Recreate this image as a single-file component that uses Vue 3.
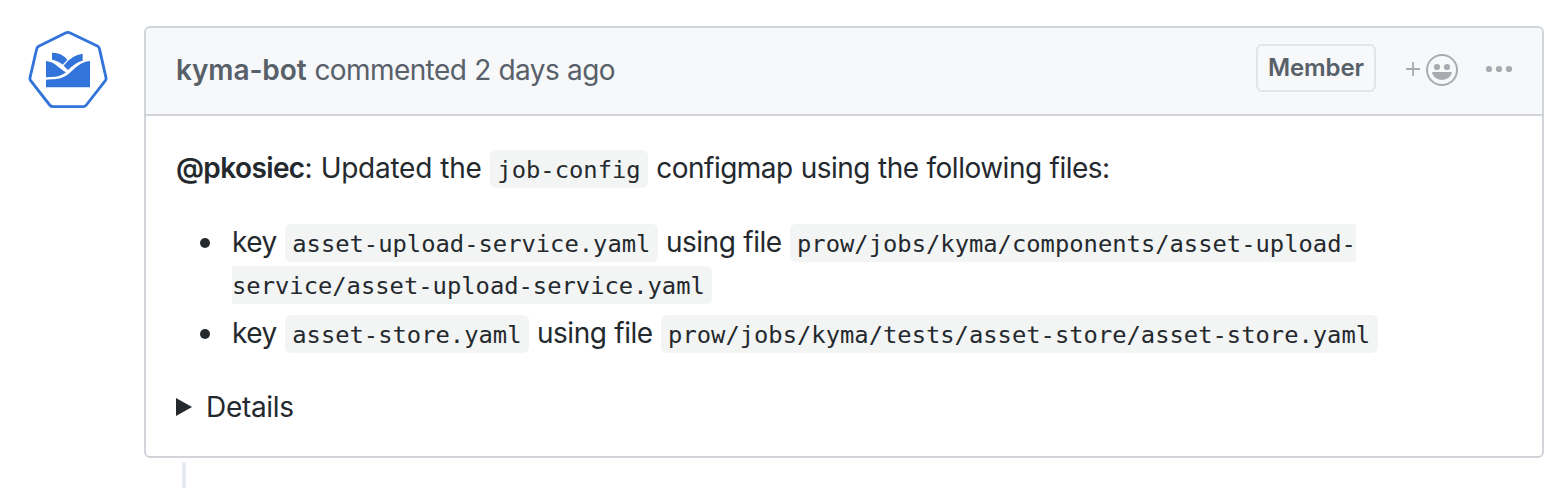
<script setup>
const files = [
  { key: 'asset-upload-service.yaml', path: 'prow/jobs/kyma/components/asset-upload-service/asset-upload-service.yaml' },
  { key: 'asset-store.yaml', path: 'prow/jobs/kyma/tests/asset-store/asset-store.yaml' },
]
</script>

<template>
  <main class="timeline">
    <svg class="avatar" viewBox="54 48 240 240" aria-label="kyma-bot">
      <path d="M168 53.5Q173.500 51 179 53.500L262 93Q267 95.500 268 100L288 188Q289 193 286 197L229 270Q225 275 219 275H129Q123 275 119 270L62 197Q59 193 60 188L80 102Q81 97 86 94Z" fill="#fff" stroke="#3274d9" stroke-width="8.5" stroke-linejoin="round" />
      <g fill="#3274d9">
        <path d="M126 113Q154 112 172 134L158 149Q146 138 126 134Z" />
        <path d="M218 116V137Q198 141 174 165L161 152Q186 119 218 116Z" />
        <path d="M108 138C138 142 148 162 168 172Q153 184 136 185Q122 185 108 187Z" />
        <path d="M240 138V217H108V194C132 192 154 196 178 175C196 159 211 140 240 138Z" />
      </g>
    </svg>
    <div class="column">
      <article class="comment">
        <header class="head">
          <div class="byline"><strong>kyma-bot</strong> <span class="when">commented 2 days ago</span></div>
          <div class="actions">
            <span class="label">Member</span>
            <svg class="react" viewBox="0 0 54 34" fill="#a8abb1">
              <path d="M1 16H15M8 9V23" stroke="#a8abb1" stroke-width="1.800" />
              <circle cx="37" cy="17" r="15" fill="none" stroke="#a8abb1" stroke-width="2" />
              <circle cx="32" cy="14" r="3.100" />
              <circle cx="42" cy="14" r="3.100" />
              <path d="M28 19H46Q47.300 19 46.800 20.300C45 25 41 27 37 27S29 25 27.200 20.300Q26.700 19 28 19Z" />
            </svg>
            <svg class="more" viewBox="0 0 28 8" fill="#a8abb1"><circle cx="4" cy="4" r="3.100" /><circle cx="14" cy="4" r="3.100" /><circle cx="24" cy="4" r="3.100" /></svg>
          </div>
        </header>
        <div class="body">
          <p><strong>@pkosiec</strong><span class="lead">: Updated the </span><code>job-config</code> configmap using the following files:</p>
          <ul>
            <li v-for="f in files" :key="f.key">key <code>{{ f.key }}</code> using file <code>{{ f.path }}</code></li>
          </ul>
          <div class="details"><svg viewBox="0 0 16 18"><path d="M0 0L16 9L0 18Z" fill="#24292e" /></svg><span>Details</span></div>
        </div>
      </article>
      <div class="rail"></div>
    </div>
  </main>
</template>

<style>
body { margin: 0; background: #fff; }
</style>

<style scoped>
.timeline {
  box-sizing: border-box;
  width: 1564px;
  height: 492px;
  padding: 26px 20px 0 28px;
  display: flex;
  gap: 36px;
  overflow: hidden;
  background: #fff;
  color: #24292e;
  font-family: Inter, "Liberation Sans", sans-serif;
  font-size: 28px;
  line-height: 42px;
  letter-spacing: -0.5px;
  word-spacing: 0.6px;
}
.avatar { width: 80px; height: 80px; margin-top: 5px; flex: none; }
.column { flex: none; width: 1400px; }
.comment {
  box-sizing: border-box;
  height: 432px;
  border: 2px solid #d1d5da;
  border-radius: 6px;
  background: #fff;
}
.head {
  box-sizing: border-box;
  height: 88px;
  padding: 0 29px 0 30px;
  display: flex;
  justify-content: space-between;
  align-items: center;
  background: #f6f8fa;
  border-bottom: 2px solid #d1d5da;
  border-radius: 4px 4px 0 0;
  color: #586069;
}
.byline { margin-top: -2px; letter-spacing: -0.58px; }
.byline strong { letter-spacing: -0.1px; }
strong { font-weight: 600; letter-spacing: -0.6px; }
.lead { letter-spacing: -0.25px; }
.actions { display: flex; align-items: center; margin-top: -7px; }
.label {
  box-sizing: border-box;
  width: 120px;
  height: 48px;
  border: 2px solid #e1e4e8;
  border-radius: 6px;
  text-align: center;
  font-size: 24px;
  font-weight: 600;
  line-height: 44px;
  letter-spacing: -0.1px;
}
.react { width: 54px; height: 34px; margin: 4px 0 0 29px; }
.more { width: 28px; height: 8px; margin: 3px 0 0 26px; }
.body { padding: 30px; }
p { margin: 1px 0 32px; }
ul { margin: 0 0 32px; padding-left: 56px; list-style: none; }
li { position: relative; }
li::before {
  content: "";
  position: absolute;
  left: -32px;
  top: 17px;
  width: 10px;
  height: 10px;
  border-radius: 50%;
  background: #24292e;
}
li + li { margin-top: 7px; }
code {
  padding: 6px 7.6px 4px 7.5px;
  border-radius: 6px;
  background: #f3f4f4;
  font-family: "DejaVu Sans Mono", monospace;
  font-size: 23.8px;
  line-height: 1;
  letter-spacing: 0;
}
.details { display: flex; align-items: center; gap: 14px; letter-spacing: -0.3px; }
.details svg { width: 16px; height: 18px; }
.rail { width: 4px; height: 26px; margin: 4px 0 0 38px; background: #e6ebf1; }
</style>
